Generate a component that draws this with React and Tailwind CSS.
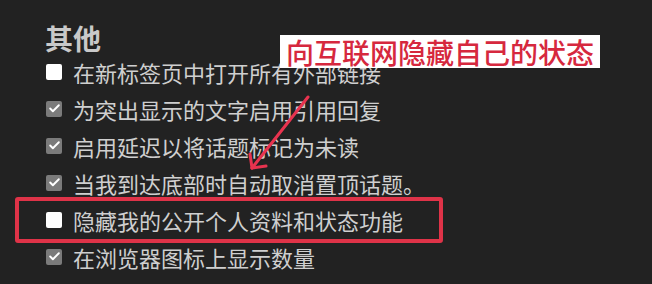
import { Check } from "lucide-react";

const ITEMS = [
  { label: "在新标签页中打开所有外部链接", checked: false },
  { label: "为突出显示的文字启用引用回复", checked: true },
  { label: "启用延迟以将话题标记为未读", checked: true },
  { label: "当我到达底部时自动取消置顶话题。", checked: true },
  { label: "隐藏我的公开个人资料和状态功能", checked: false },
  { label: "在浏览器图标上显示数量", checked: true },
];

const Box = ({ checked }) =>
  checked ? (
    <span className="w-4 h-4 rounded-[2px] bg-[#7b7b7b] flex items-center justify-center shrink-0">
      <Check size={13} strokeWidth={3.5} color="#ffffff" />
    </span>
  ) : (
    <span className="w-4 h-4 rounded-[2px] bg-white shrink-0"></span>
  );

export default function App() {
  return (
    <div
      className="relative w-[652px] h-[284px] bg-[#222222] overflow-hidden"
      style={{ fontFamily: '"Noto Sans CJK SC", "Noto Sans", sans-serif' }}
    >
      <div className="pl-[46px] pt-[23px]">
        <h2 className="text-[28px] leading-[30px] font-bold text-[#c9c9c9] -ml-[1px]">其他</h2>
        {ITEMS.map((item) => (
          <div key={item.label} className="h-[37px] flex items-center gap-[11px]">
            <Box checked={item.checked} />
            <span className="text-[22px] text-[#cfcfcf] leading-none">{item.label}</span>
          </div>
        ))}
      </div>

      {/* highlight box */}
      <div className="absolute left-[15px] top-[197px] w-[428px] h-[46px] border-4 border-[#df3348] rounded-[3px]"></div>

      {/* callout */}
      <div className="absolute left-[280px] top-[35px] w-[320px] h-[33px] bg-white flex items-center justify-center">
        <span className="text-[28px] leading-none font-medium text-[#d6283e]">向互联网隐藏自己的状态</span>
      </div>

      {/* arrow */}
      <svg className="absolute inset-0 pointer-events-none" width="652" height="284">
        <g stroke="#e8334f" strokeWidth="3" strokeLinecap="round" fill="none">
          <line x1="308" y1="97" x2="252" y2="168" />
          <line x1="252" y1="168" x2="250" y2="154" />
          <line x1="252" y1="168" x2="266" y2="166" />
        </g>
      </svg>
    </div>
  );
}
